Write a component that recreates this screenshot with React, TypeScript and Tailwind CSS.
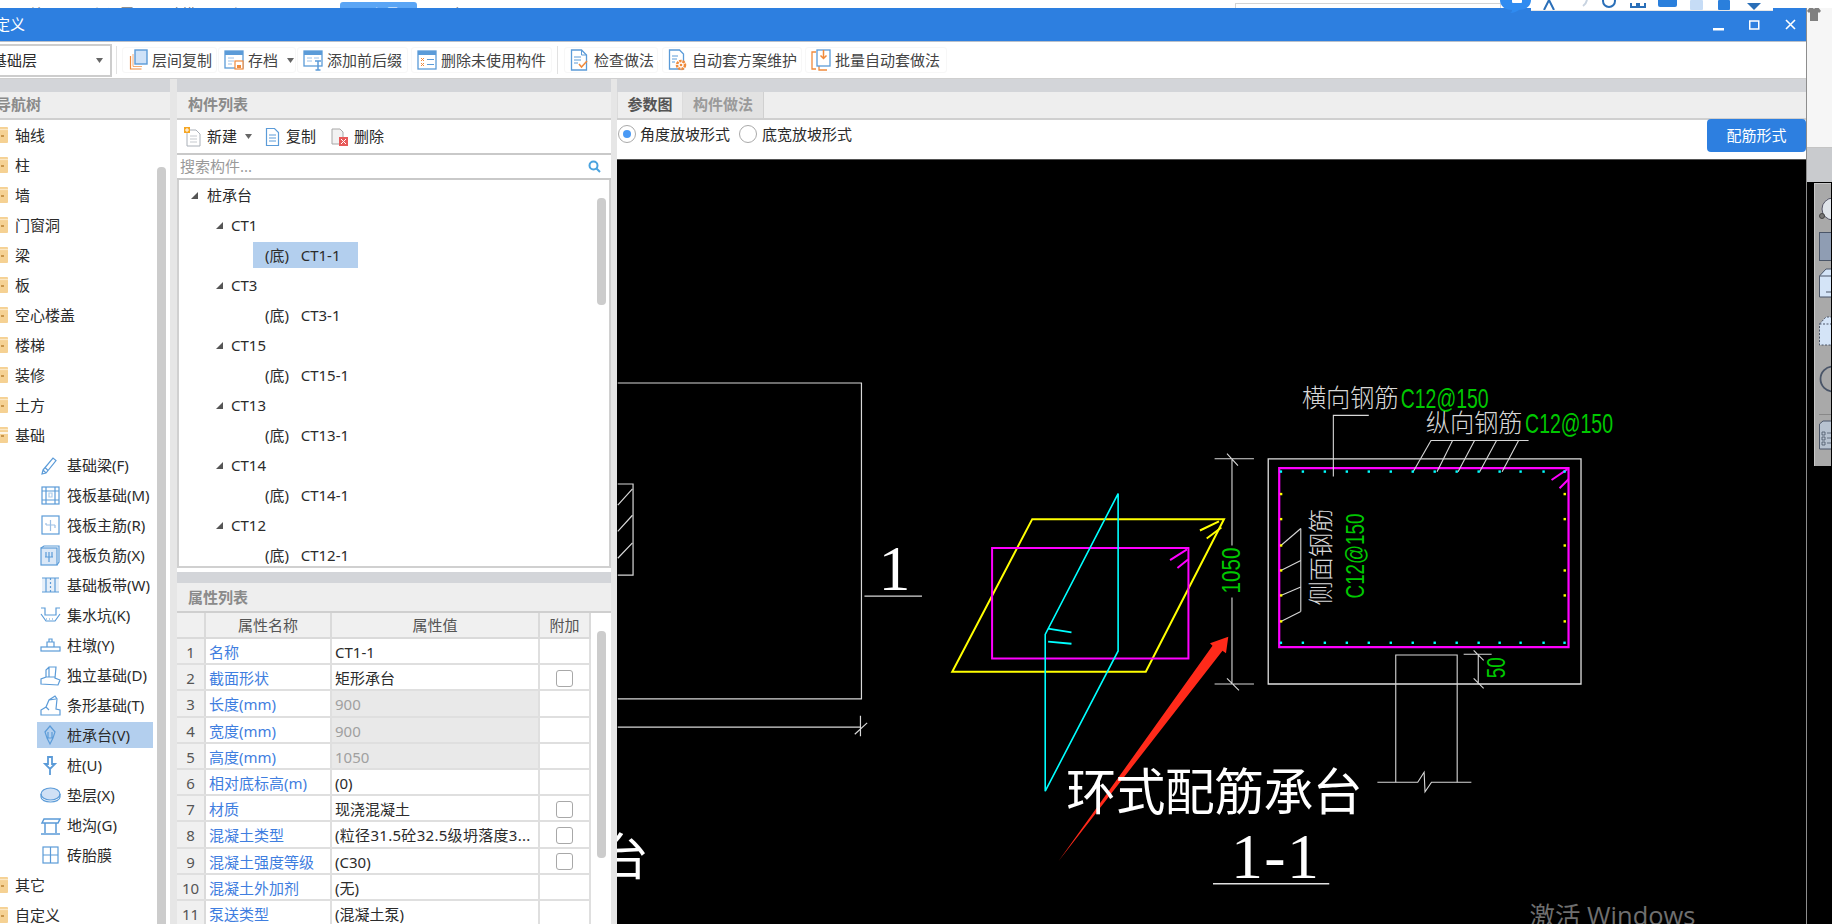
import React from "react";

const FONT = "font-['Noto_Sans','Noto_Sans_CJK_SC',sans-serif]";
const BLUE = "#5b9bd8";
const ORANGE = "#f08a3c";

const Arrow = () => (
  <svg width="7" height="5" viewBox="0 0 7 5" className="shrink-0"><path d="M0 0h7L3.5 5z" fill="#666" /></svg>
);

const Ico: Record<string, React.ReactNode> = {
  floorCopy: (
    <svg width="20" height="22" viewBox="0 0 20 22" fill="none">
      <path d="M2.5 7v13h11" stroke={ORANGE} strokeWidth="1.2" />
      <path d="M5 5v12.500h9" stroke={ORANGE} strokeWidth="1" opacity=".7" />
      <rect x="7" y="1" width="12" height="14" fill="#cfe2f8" stroke={BLUE} strokeWidth="1.400" />
    </svg>
  ),
  save: (
    <svg width="20" height="22" viewBox="0 0 20 22" fill="none">
      <rect x="1" y="2" width="18" height="17" fill="#fff" stroke={BLUE} strokeWidth="1.300" />
      <rect x="1" y="2" width="18" height="4" fill={BLUE} />
      <path d="M4 9h6M4 12h6M4 15h4" stroke="#9cc2ea" />
      <rect x="11" y="12" width="8" height="8" fill="#fff" stroke={ORANGE} strokeWidth="1.200" />
      <rect x="13" y="16" width="4" height="3" fill={ORANGE} />
    </svg>
  ),
  prefix: (
    <svg width="20" height="22" viewBox="0 0 20 22" fill="none">
      <rect x="1" y="2" width="18" height="15" fill="#fff" stroke={BLUE} strokeWidth="1.300" />
      <rect x="1" y="2" width="18" height="4" fill={BLUE} />
      <path d="M4 9h5M11 9h5M4 12h5" stroke="#9cc2ea" />
      <path d="M12 12h6M15 12v9M12.500 21h5" stroke={BLUE} strokeWidth="1.500" />
    </svg>
  ),
  unused: (
    <svg width="20" height="20" viewBox="0 0 20 20" fill="none">
      <rect x="1" y="1" width="18" height="18" fill="#fff" stroke={BLUE} strokeWidth="1.300" />
      <rect x="1" y="1" width="18" height="4" fill={BLUE} />
      <path d="M4 8l3 3M7 8l-3 3M4 13l3 3M7 13l-3 3" stroke={ORANGE} />
      <path d="M10 9.500h7M10 14.500h7" stroke={BLUE} />
    </svg>
  ),
  check: (
    <svg width="20" height="22" viewBox="0 0 20 22" fill="none">
      <path d="M1.500 1h10l5 5v15h-15z" fill="#fff" stroke={BLUE} strokeWidth="1.300" />
      <path d="M11.500 1v5h5M4 8h7M4 11h7M4 14h4" stroke={BLUE} />
      <path d="M9 15l2.500 3 5.500-6" stroke={ORANGE} strokeWidth="1.500" />
    </svg>
  ),
  gear: (
    <svg width="20" height="22" viewBox="0 0 20 22" fill="none">
      <path d="M1.500 1h10l4 4v15h-14z" fill="#fff" stroke={BLUE} strokeWidth="1.300" />
      <path d="M4 7h6M4 10h5M4 13h3" stroke={BLUE} />
      <circle cx="13" cy="16" r="4" fill="#fff" stroke={ORANGE} strokeWidth="2.500" strokeDasharray="2.500 0.800" />
      <circle cx="13" cy="16" r="1.300" fill={ORANGE} />
    </svg>
  ),
  batch: (
    <svg width="20" height="22" viewBox="0 0 20 22" fill="none">
      <path d="M5 3H1v17h4M8 6v15h8" stroke={ORANGE} strokeWidth="1.300" />
      <rect x="6" y="1" width="13" height="16" fill="#fff" stroke={BLUE} strokeWidth="1.300" />
      <path d="M12.500 1v8M9.500 6.500l3 3 3-3" stroke={ORANGE} strokeWidth="1.500" />
    </svg>
  ),
  newDoc: (
    <svg width="18" height="20" viewBox="0 0 18 20" fill="none">
      <path d="M3 3h9l4 4v12H3z" fill="#fff" stroke="#aab0b8" />
      <path d="M6 9h7M6 12h7M6 15h7" stroke="#c5c9ce" />
      <rect x="0" y="0" width="6" height="6" fill="#f6a623" />
      <path d="M1 3h4M3 1v4" stroke="#fff" />
    </svg>
  ),
  copyDoc: (
    <svg width="18" height="20" viewBox="0 0 18 20" fill="none">
      <path d="M2.500 1.500h8l4 4v13h-12z" fill="#fff" stroke={BLUE} strokeWidth="1.200" />
      <path d="M5 8h7M5 11h7M5 14h7" stroke={BLUE} />
    </svg>
  ),
  delDoc: (
    <svg width="18" height="20" viewBox="0 0 18 20" fill="none">
      <path d="M1 2h8l3 3v12H1z" fill="#f2f2f2" stroke="#a8a8a8" />
      <rect x="8" y="10" width="9" height="9" fill="#e75a5a" />
      <path d="M10 12l5 5M15 12l-5 5" stroke="#fff" />
    </svg>
  ),
};

const Folder = ({ open }: { open?: boolean }) => (
  <svg width="8" height="16" viewBox="0 0 8 16" className="shrink-0" fill="none">
    <rect x="-6" y="0" width="14" height="16" rx="1" fill="#f5d193" />
    <path d="M-6 2.500h14" stroke="#fbe8c6" strokeWidth="1.200" />
    {open ? <path d="M0 5h8v2H0z" fill="#fff" opacity=".75" /> : null}
    <rect x="1" y="8" width="3" height="2" fill="#c9954a" />
  </svg>
);

const S = { fill: "none", stroke: BLUE, strokeWidth: 1.2 };
const NavIco: Record<string, React.ReactNode> = {
  beam: <g {...S}><path d="M3 15L13 3l3 2.500L6 18l-4 1zM3 15l3 3M5 12.500l3 3" /></g>,
  raft: <g {...S}><rect x="2" y="2" width="17" height="17" /><path d="M6 2v17M15 2v17M2 6h17M2 15h17" /><path d="M9 8h3v4H9z" opacity=".5" /></g>,
  raftMain: <g {...S}><rect x="2" y="1" width="17" height="18" /><path d="M10.500 5v11M6 10h9M6 10v-2M15 10v3" stroke="#9bbfe5" /></g>,
  raftNeg: <g {...S}><rect x="1" y="3" width="16" height="17" fill="#dbe8f7" /><path d="M1 3l3-2h15v16l-2 3M9 7v10M6 7v5M12 7v5M5 12h8" /></g>,
  band: <g {...S}><rect x="2" y="3" width="17" height="14" fill="#dbe8f7" stroke="none" opacity=".7" /><path d="M2 3h17M2 17h17M6 3v14M15 3v14" /><path d="M10.500 3v14" strokeDasharray="2 2" /></g>,
  sump: <g {...S}><path d="M1 3h4v7h11V3h4M1 9l5 7h9l5-7" /><path d="M6 14h9" strokeDasharray="1 2" /></g>,
  pier: <g {...S}><rect x="1" y="12" width="19" height="4" /><path d="M7 12V7h7v5M9 7V4h3v3" /></g>,
  iso: <g {...S}><path d="M1 19v-5l5-2V5l3-3h7l-1 11 5 2-2 5zM6 12h9M9 2v10" /></g>,
  strip: <g {...S}><path d="M1 20v-5l5-3 3-7 6-4 2 3-1 10 4 1v5zM9 5l7-1M6 12l3 3" /></g>,
  cap: <g {...S}><path d="M10 1l5 6-2 6H7L5 7zM8 7v6M12 7v6M7 13l3 6 3-6" /></g>,
  pile: <g {...S} strokeWidth={1.800}><path d="M8 2h4v7h3l-5 5-5-5h3zM10 14v6" /></g>,
  cushion: <g {...S}><ellipse cx="10.500" cy="9" rx="9.500" ry="6" fill="#cfe0f5" /><path d="M1 9v3c0 3 4.500 5 9.500 5s9.500-2 9.500-5V9" /></g>,
  trench: <g {...S} strokeWidth={1.500}><path d="M4 4h16l-2 4H2zM5 8v10M16 8v10M1 19h19" /></g>,
  brick: <g {...S}><rect x="3" y="2" width="15" height="16" /><path d="M10.500 2v16M3 10h15" /></g>,
};

const Child = ({ k }: { k: string }) => (
  <svg width="21" height="21" viewBox="0 0 21 21" className="shrink-0">{NavIco[k]}</svg>
);

const NAV: { t: string; k?: string; on?: boolean; open?: boolean }[] = [
  { t: "轴线" }, { t: "柱" }, { t: "墙" }, { t: "门窗洞" }, { t: "梁" }, { t: "板" },
  { t: "空心楼盖" }, { t: "楼梯" }, { t: "装修" }, { t: "土方" }, { t: "基础", open: true },
  { t: "基础梁(F)", k: "beam" }, { t: "筏板基础(M)", k: "raft" }, { t: "筏板主筋(R)", k: "raftMain" },
  { t: "筏板负筋(X)", k: "raftNeg" }, { t: "基础板带(W)", k: "band" }, { t: "集水坑(K)", k: "sump" },
  { t: "柱墩(Y)", k: "pier" }, { t: "独立基础(D)", k: "iso" }, { t: "条形基础(T)", k: "strip" },
  { t: "桩承台(V)", k: "cap", on: true }, { t: "桩(U)", k: "pile" }, { t: "垫层(X)", k: "cushion" },
  { t: "地沟(G)", k: "trench" }, { t: "砖胎膜", k: "brick" }, { t: "其它" }, { t: "自定义" },
];

const TREE: { t: string; l: number; on?: boolean }[] = [
  { t: "桩承台", l: 0 }, { t: "CT1", l: 1 }, { t: "(底)   CT1-1", l: 2, on: true },
  { t: "CT3", l: 1 }, { t: "(底)   CT3-1", l: 2 }, { t: "CT15", l: 1 }, { t: "(底)   CT15-1", l: 2 },
  { t: "CT13", l: 1 }, { t: "(底)   CT13-1", l: 2 }, { t: "CT14", l: 1 }, { t: "(底)   CT14-1", l: 2 },
  { t: "CT12", l: 1 }, { t: "(底)   CT12-1", l: 2 },
];

const PROPS: { n: string; v: string; dis?: boolean; c?: boolean; wide?: boolean }[] = [
  { n: "名称", v: "CT1-1" },
  { n: "截面形状", v: "矩形承台", c: true },
  { n: "长度(mm)", v: "900", dis: true },
  { n: "宽度(mm)", v: "900", dis: true },
  { n: "高度(mm)", v: "1050", dis: true },
  { n: "相对底标高(m)", v: "(0)" },
  { n: "材质", v: "现浇混凝土", c: true },
  { n: "混凝土类型", v: "(粒径31.5砼32.5级坍落度3...", c: true, wide: true },
  { n: "混凝土强度等级", v: "(C30)", c: true },
  { n: "混凝土外加剂", v: "(无)" },
  { n: "泵送类型", v: "(混凝土泵)" },
];

const Btn = ({ icon, text, cls, arrow }: { icon: string; text: string; cls: string; arrow?: boolean }) => (
  <div className={`flex items-center h-[26px] pl-[5px] border border-[#f7f7f7] rounded-[3px] shrink-0 ${cls}`}>
    <span className="w-[20px] flex justify-start shrink-0">{Ico[icon]}</span>
    <span className="ml-[4px] whitespace-nowrap text-[#444]">{text}</span>
    {arrow && <span className="ml-[9px]"><Arrow /></span>}
  </div>
);

const PanelHead = ({ children }: { children: React.ReactNode }) => (
  <div className="h-[28px] bg-[#eeeeee] border-b-2 border-[#cfcfcf] flex items-center shrink-0 pb-[2px]">{children}</div>
);

const Strip = ({ cls }: { cls: string }) => <div className={`bg-[#d3d5d9] shrink-0 ${cls}`} />;

const CG = "#00c800";
const CAD_CJK = "'Noto Sans CJK SC','Liberation Sans',sans-serif";
const CAD_NUM = "'Liberation Sans',sans-serif";

const Drawing = () => {
  const topX = [1431.3, 1452.9, 1474.9, 1496.9, 1519];
  const botX = [1413.4, 1437.3, 1458.4, 1480, 1502.5];
  const dotX = [1281, 1303, 1325, 1347, 1369, 1391, 1413, 1435, 1457, 1479, 1500, 1521, 1544, 1565];
  const dotY = [493.5, 518.6, 545, 570, 595, 621];
  const side = [[528, 545], [560, 570], [586.600, 595], [611, 621]];
  return (
    <svg viewBox="617 159 1189 765" className="block w-full h-full" fill="none">
      {/* left elevation */}
      <g stroke="#d8d8d8" strokeWidth="1.200">
        <path d="M617 382.300H861V698.500H617" />
        <path d="M617 483.400H632.300V574.700H617" />
        <path d="M617 504.600L631.700 488.400M617 530.900L631.700 514.700M617 557.800L631.700 542.400" />
        <path d="M617 726.900H860M860 715.400V736M854.300 734L866.700 722.600" />
        <path d="M864 595.600H921.600" />
      </g>
      <text x="878" y="590" fontFamily="'Liberation Serif',serif" fontSize="64" fill="#fff">1</text>
      <text x="598" y="875" fontFamily={CAD_CJK} fontSize="50" fill="#fff">台</text>

      {/* 3D sketch */}
      <path d="M1032 518.600H1224L1145.700 671.500H951.900Z" stroke="#ffff00" strokeWidth="2" />
      <path d="M1199.900 530L1219 520.800M1206.700 538L1221.400 527" stroke="#ffff00" strokeWidth="2" />
      <path d="M991.800 547.400H1188.400V658.200H991.800Z" stroke="#ff00ff" strokeWidth="2" />
      <path d="M1170 559.600L1187 548.800M1177.400 567.600L1188 559" stroke="#ff00ff" strokeWidth="2" />
      <path d="M1118 493V650.600L1045 791V634Z" stroke="#00ffff" strokeWidth="1.600" />
      <path d="M1047.900 628.300L1071.300 632M1047.900 641.300L1071.300 643.400" stroke="#00ffff" strokeWidth="1.800" />

      {/* section */}
      <path d="M1268.300 458.200H1581.500V683.700H1268.300Z" stroke="#e0e0e0" strokeWidth="1.300" />
      <path d="M1279.300 467.500H1569V646.700H1279.300Z" stroke="#ff00ff" strokeWidth="2.200" />
      <path d="M1552 479.400L1568 468.600M1560 487.700L1569 478.700" stroke="#ff00ff" strokeWidth="2" />
      <g stroke="#d8d8d8" strokeWidth="1.100">
        <path d="M1369 414.700H1333.500V476" />
        <path d="M1431 439.900H1529" />
        {topX.map((x, i) => <path key={x} d={`M${x} 439.900L${botX[i]} 471.100`} />)}
        <path d="M1300.900 528V611" />
        {side.map(([a, b]) => <path key={a} d={`M1300.900 ${a}L1281 ${b}`} />)}
        <path d="M1214.600 458.200H1254M1214.600 683.700H1254M1232 458.200V545M1232 597V683.700M1227 453L1238 465M1227 678L1239 690" />
        <path d="M1464 653.900H1492M1478.600 653.900V683.700M1474 650L1484 660M1474 678L1484 688" />
        <path d="M1396 782V654.600H1457.500V782" />
        <path d="M1377.600 782H1418L1424.400 772L1425.300 791.600L1431.800 782H1471.700" />
      </g>
      {dotX.map((x) => (
        <g key={x} fill="#00ffff">
          <rect x={x - 1.200} y="469.800" width="2.400" height="2.400" />
          <rect x={x - 1.200} y="641.200" width="2.400" height="2.400" />
        </g>
      ))}
      {dotY.map((y) => (
        <g key={y} fill="#ffff00">
          <rect x="1280" y={y - 1.200} width="2.400" height="2.400" />
          <rect x="1564" y={y - 1.200} width="2.400" height="2.400" />
        </g>
      ))}

      {/* CAD texts */}
      <text x="1302" y="406" fontFamily={CAD_CJK} fontWeight="300" fontSize="25" fill="#d8d8d8" textLength="97" lengthAdjust="spacingAndGlyphs">横向钢筋</text>
      <text x="1401" y="407" fontFamily={CAD_NUM} fontSize="27" fill={CG} textLength="88" lengthAdjust="spacingAndGlyphs">C12@150</text>
      <text x="1426" y="431" fontFamily={CAD_CJK} fontWeight="300" fontSize="25" fill="#d8d8d8" textLength="97" lengthAdjust="spacingAndGlyphs">纵向钢筋</text>
      <text x="1525.500" y="432" fontFamily={CAD_NUM} fontSize="27" fill={CG} textLength="88" lengthAdjust="spacingAndGlyphs">C12@150</text>
      <text transform="translate(1330 605) rotate(-90)" fontFamily={CAD_CJK} fontWeight="300" fontSize="25" fill="#d8d8d8" textLength="97" lengthAdjust="spacingAndGlyphs">侧面钢筋</text>
      <text transform="translate(1364 598) rotate(-90)" fontFamily={CAD_NUM} fontSize="26" fill={CG} textLength="85" lengthAdjust="spacingAndGlyphs">C12@150</text>
      <text transform="translate(1240 593) rotate(-90)" fontFamily={CAD_NUM} fontSize="26" fill={CG} textLength="46" lengthAdjust="spacingAndGlyphs">1050</text>
      <text transform="translate(1505 678) rotate(-90)" fontFamily={CAD_NUM} fontSize="26" fill={CG} textLength="21" lengthAdjust="spacingAndGlyphs">50</text>

      {/* annotation arrow */}
      <path d="M1058.400 861L1212.500 645.500L1210 643L1228.300 636.300L1226 653L1222.500 650.500Z" fill="#ff2a1a" />

      <text x="1066" y="810" fontFamily={CAD_CJK} fontSize="50" fill="#fff" textLength="297" lengthAdjust="spacing">环式配筋承台</text>
      <text x="1231" y="878" fontFamily="'Liberation Serif',serif" fontSize="64" fill="#fff" textLength="88" lengthAdjust="spacing">1-1</text>
      <path d="M1213 883.700H1329.400" stroke="#e0e0e0" strokeWidth="1.300" />

      <text x="1530" y="925" fontFamily="'Open Sans','Noto Sans CJK SC',sans-serif" fontSize="25.500" fill="#6f6f6f">激活 Windows</text>
    </svg>
  );
};

const Palette = () => (
  <div className="mt-px h-[283px] w-[17px] bg-[#a9a9a9] border-l border-t border-[#c8c8c8] overflow-hidden flex flex-col pl-[4px]">
    <svg width="14" height="24" viewBox="0 0 14 24" className="mt-[13px] shrink-0">
      <circle cx="14" cy="12" r="11" fill="#dfe4ea" stroke="#556" />
      <circle cx="3" cy="19" r="2.500" fill="#777" stroke="#444" />
    </svg>
    <div className="mt-[11px] h-[29px] w-[14px] bg-[#8f9db3] border border-[#4a5568] shrink-0" />
    <svg width="14" height="30" viewBox="0 0 14 30" className="mt-[7px] shrink-0" fill="#d4e4f7" stroke="#4a5568">
      <path d="M.500 8L7 1h8v28H.500zM.500 8H15M7 24h8" />
    </svg>
    <svg width="14" height="30" viewBox="0 0 14 30" className="mt-[18px] shrink-0" fill="#d4e4f7" stroke="#4a5568" strokeDasharray="2 1.500">
      <path d="M.500 8L7 1h8v28H.500zM.500 8H15" />
    </svg>
    <svg width="14" height="30" viewBox="0 0 14 30" className="mt-[18px] shrink-0" fill="none" stroke="#4a5568" strokeWidth="1.800">
      <circle cx="14" cy="15" r="12.500" />
    </svg>
    <div className="mt-[20px] h-px bg-[#888] shrink-0" />
    <svg width="14" height="30" viewBox="0 0 14 30" className="mt-[5px] shrink-0" fill="#b7c2d0" stroke="#4a5568">
      <path d="M.500 4L4 1h11v28H.500z" />
      <path d="M3 12h3v3H3zM3 17h3v3H3zM3 22h3v3H3zM8 13h6M8 18h6M8 23h6" fill="none" strokeWidth=".8" />
    </svg>
  </div>
);

export default function App() {
  return (
    <div className={`relative w-[1832px] h-[924px] overflow-hidden bg-white flex flex-col text-[15px] leading-none text-[#2b2b2b] ${FONT}`}>
      {/* strip of the program behind the window */}
      <div className="h-[8px] shrink-0 flex overflow-hidden text-[14px] text-[#777] bg-white">
        <span className="ml-[16px] mt-[7px]">开始</span>
        <span className="ml-[34px] mt-[7px] whitespace-nowrap">工程设置</span>
        <span className="ml-[34px] mt-[7px]">建模</span>
        <span className="ml-[37px] mt-[7px]">视图</span>
        <span className="ml-[34px] mt-[7px]">工具</span>
        <div className="ml-[17px] mt-[2px] w-[77px] h-[6px] rounded-t-[3px] bg-[#5aa5f5] flex justify-center text-white shrink-0">
          <span className="mt-[5px] whitespace-nowrap">工程量</span>
        </div>
        <span className="ml-[19px] mt-[7px] whitespace-nowrap">云应用</span>
        <div className="ml-[757px] mt-[3px] w-[266px] h-[8px] border border-[#d4d4d4] shrink-0" />
      </div>

      <div className="flex flex-1 min-h-0">
        {/* window */}
        <div className="w-[1807px] shrink-0 flex flex-col border-r border-[#8d8d8d]">
          {/* title bar */}
          <div className="h-[34px] bg-[#2d7fe0] border-b border-[#b9c0ca] flex items-center justify-between shrink-0 text-white">
            <span className="ml-[-5px]">定义</span>
            <div className="flex items-center mr-[10px]">
              <svg width="12" height="12" viewBox="0 0 12 12"><rect x="0" y="9" width="11" height="2.500" fill="#fff" /></svg>
              <svg width="11" height="10" viewBox="0 0 11 10" className="ml-[24px]" fill="none"><rect x=".75" y="1" width="9" height="8" stroke="#fff" strokeWidth="1.500" /></svg>
              <svg width="11" height="11" viewBox="0 0 11 11" className="ml-[25px]" stroke="#fff" strokeWidth="1.600"><path d="M1 1l9 9M10 1l-9 9" /></svg>
            </div>
          </div>

          {/* toolbar */}
          <div className="h-[37px] bg-white border-b border-[#cfcfcf] flex items-center shrink-0">
            <div className="w-[112px] h-[33px] border-2 border-l-0 border-[#cdcdcd] flex items-center justify-between pr-[7px] shrink-0 overflow-hidden">
              <span className="ml-[-8px] whitespace-nowrap">基础层</span>
              <Arrow />
            </div>
            <div className="ml-[4px] w-px h-[28px] bg-[#e2e2e2] shrink-0" />
            <Btn icon="floorCopy" text="层间复制" cls="ml-[5px] w-[95px]" />
            <Btn icon="save" text="存档" cls="ml-[1px] w-[78px]" arrow />
            <Btn icon="prefix" text="添加前后缀" cls="ml-[1px] w-[111px]" />
            <Btn icon="unused" text="删除未使用构件" cls="ml-[3px] w-[141px]" />
            <div className="ml-[5px] w-px h-[28px] bg-[#e2e2e2] shrink-0" />
            <Btn icon="check" text="检查做法" cls="ml-[6px] w-[94px]" />
            <Btn icon="gear" text="自动套方案维护" cls="ml-[4px] w-[140px]" />
            <Btn icon="batch" text="批量自动套做法" cls="ml-[3px] w-[142px]" />
          </div>

          {/* body */}
          <div className="flex flex-1 min-h-0 overflow-hidden">
            {/* navigation */}
            <div className="w-[170px] shrink-0 flex flex-col relative overflow-hidden">
              <Strip cls="h-[13px]" />
              <PanelHead><span className="ml-[-4px] font-bold text-[#8a8a8a]">导航树</span></PanelHead>
              <div>
                {NAV.map((n) => (
                  <div key={n.t} className="h-[30px] flex items-center whitespace-nowrap">
                    {n.k ? (
                      <div className={`ml-[37px] h-[26px] w-[116px] flex items-center pl-[3px] ${n.on ? "bg-[#b3cfee]" : ""}`}>
                        <Child k={n.k} />
                        <span className="ml-[6px]">{n.t}</span>
                      </div>
                    ) : (
                      <>
                        <Folder open={n.open} />
                        <span className="ml-[7px]">{n.t}</span>
                      </>
                    )}
                  </div>
                ))}
              </div>
              <div className="absolute left-[157px] top-[88px] bottom-0 w-[9px] bg-[#cccccc] rounded-t-[4px]" />
            </div>
            <div className="w-[7px] shrink-0 bg-[#e6e6e6]" />

            {/* components */}
            <div className="w-[434px] shrink-0 flex flex-col overflow-hidden">
              <Strip cls="h-[13px]" />
              <PanelHead><span className="ml-[11px] font-bold text-[#8a8a8a]">构件列表</span></PanelHead>
              <div className="h-[33px] flex items-center shrink-0">
                <span className="ml-[7px] w-[18px]">{Ico.newDoc}</span>
                <span className="ml-[5px]">新建</span>
                <span className="ml-[8px]"><Arrow /></span>
                <span className="ml-[12px] w-[18px]">{Ico.copyDoc}</span>
                <span className="ml-[4px]">复制</span>
                <span className="ml-[15px] w-[18px]">{Ico.delDoc}</span>
                <span className="ml-[5px]">删除</span>
              </div>
              <div className="h-[27px] border-y-2 border-[#c9c9c9] flex items-center justify-between shrink-0 pl-[3px] pr-[10px]">
                <span className="text-[#9a9a9a]">搜索构件...</span>
                <svg width="13" height="13" viewBox="0 0 13 13" fill="none" stroke="#4aa3df" strokeWidth="2"><circle cx="5.500" cy="5.500" r="4" /><path d="M8.500 8.500l3.500 3.500" /></svg>
              </div>
              <div className="relative h-[388px] shrink-0 border-x-2 border-b-2 border-[#d0d0d0] overflow-hidden">
                {TREE.map((r, i) => (
                  <div key={i} className="h-[30px] flex items-center whitespace-pre">
                    {r.l === 0 && <><svg width="7" height="7" viewBox="0 0 7 7" className="ml-[12px]"><path d="M7 0v7H0z" fill="#555" /></svg><span className="ml-[9px]">{r.t}</span></>}
                    {r.l === 1 && <><svg width="7" height="7" viewBox="0 0 7 7" className="ml-[37px]"><path d="M7 0v7H0z" fill="#555" /></svg><span className="ml-[8px]">{r.t}</span></>}
                    {r.l === 2 && (
                      <div className={`ml-[74px] h-[26px] w-[105px] flex items-center pl-[12px] ${r.on ? "bg-[#b3cfee]" : ""}`}>{r.t}</div>
                    )}
                  </div>
                ))}
                <div className="absolute left-[418px] top-[18px] h-[107px] w-[9px] bg-[#cccccc] rounded-[4px]" />
              </div>
              <div className="h-[4px] shrink-0" />
              <Strip cls="h-[11px]" />
              <div className="h-[30px] bg-[#eeeeee] border-b-2 border-[#cfcfcf] flex items-center shrink-0 pt-[1px]">
                <span className="ml-[11px] font-bold text-[#8a8a8a]">属性列表</span>
              </div>
              <div className="relative flex-1 min-h-0 overflow-hidden">
                <div className="w-[414px]">
                  <div className="flex h-[26px] bg-[#f0f0f0] border-b-2 border-[#dadada] text-[#555]">
                    <div className="w-[29px] border-r-2 border-[#dadada]" />
                    <div className="w-[126px] border-r-2 border-[#dadada] flex items-center justify-center">属性名称</div>
                    <div className="w-[208px] border-r-2 border-[#dadada] flex items-center justify-center">属性值</div>
                    <div className="w-[51px] border-r-2 border-[#dadada] flex items-center justify-center">附加</div>
                  </div>
                  {PROPS.map((p, i) => (
                    <div key={p.n} className="flex h-[26.2px] border-b-2 border-[#dfdfdf]">
                      <div className="w-[29px] bg-[#f0f0f0] border-r-2 border-[#dadada] flex items-center justify-center pt-[3px] text-[#555]">{i + 1}</div>
                      <div className="w-[126px] border-r-2 border-[#dfdfdf] flex items-center pl-[3px] pt-[3px] text-[#3f7ee0] whitespace-nowrap">{p.n}</div>
                      <div className={`w-[208px] border-r-2 border-[#dfdfdf] flex items-center pl-[3px] pt-[3px] whitespace-nowrap overflow-hidden ${p.dis ? "bg-[#e9e9e9] text-[#a0a0a0]" : ""} ${p.wide ? "tracking-[0.3px]" : ""}`}>{p.v}</div>
                      <div className="w-[51px] border-r-2 border-[#dfdfdf] flex items-center justify-center pt-[2px]">
                        {p.c && <span className="block w-[17px] h-[17px] border border-[#a8a8a8] rounded-[3px] bg-white" />}
                      </div>
                    </div>
                  ))}
                </div>
                <div className="absolute left-[420px] top-[18px] h-[227px] w-[9px] bg-[#cccccc] rounded-[4px]" />
              </div>
            </div>
            <div className="w-[6px] shrink-0 bg-[#e6e6e6]" />

            {/* parameters */}
            <div className="flex-1 min-w-0 flex flex-col">
              <Strip cls="h-[13px]" />
              <div className="h-[28px] bg-[#eeeeee] border-b-2 border-[#cfcfcf] flex shrink-0">
                <div className="w-[66px] flex items-center justify-center pb-[2px] font-bold text-[#555] border-x border-[#dcdcdc]">参数图</div>
                <div className="w-[81px] flex items-center justify-center pb-[2px] font-bold text-[#9a9a9a] bg-[#e2e2e2] border-r border-[#d0d0d0]">构件做法</div>
              </div>
              <div className="h-[39px] shrink-0 flex items-start">
                <div className="h-[28px] flex items-center ml-[1px]">
                  <span className="w-[18px] h-[18px] rounded-full border border-[#aaaaaa] flex items-center justify-center shrink-0">
                    <span className="w-[8px] h-[8px] rounded-full bg-[#4a9af5]" />
                  </span>
                  <span className="ml-[4px]">角度放坡形式</span>
                  <span className="ml-[9px] w-[18px] h-[18px] rounded-full border border-[#aaaaaa] shrink-0" />
                  <span className="ml-[5px]">底宽放坡形式</span>
                </div>
                <div className="ml-auto mt-[-1px] w-[99px] h-[33px] bg-[#2d7fe0] rounded-[4px] flex items-center justify-center text-white shrink-0">配筋形式</div>
              </div>
              <div className="flex-1 min-h-0 bg-black border-t border-[#555]">
                <Drawing />
              </div>
            </div>
          </div>
        </div>

        {/* program behind the window, right of it */}
        <div className="flex-1 min-w-0 flex flex-col">
          <div className="h-[140px] bg-[#f6f6f6] border-b border-[#c4c4c4] shrink-0 overflow-hidden">
            <svg width="14" height="14" viewBox="0 0 14 14" className="mt-[-1px]"><path d="M3 0h2l2 2 2-2h2l3 4-2 2-1-1v9H3V5L2 6 0 4z" fill="#808080" /></svg>
          </div>
          <div className="h-[34px] bg-[#c9cbce] shrink-0" />
          <div className="flex-1 min-h-0 bg-black pl-[7px]">
            <Palette />
          </div>
        </div>
      </div>

      {/* input-method bar over the top edge */}
      <div className="absolute left-[1531px] top-0 w-[242px] h-[11px] bg-white overflow-hidden border-b border-[#e6e6e6]">
        <svg width="242" height="11" viewBox="0 0 242 11" fill="none">
          <path d="M13 10L18 0M18 0L23 10" stroke="#2a6fb8" strokeWidth="2" />
          <path d="M52 6q3-2 4-6" stroke="#c8d3e0" strokeWidth="2" />
          <circle cx="78" cy="1" r="6" stroke="#2a6fb8" strokeWidth="2" />
          <path d="M100 3v4h6V3M108 3v4h6V3" stroke="#2a6fb8" strokeWidth="2" />
          <rect x="127" y="-3" width="19" height="10" rx="2" fill="#2a7fdc" />
          <rect x="159" y="0" width="13" height="10" rx="1" fill="#c6dcf6" />
          <rect x="187" y="0" width="12" height="10" rx="1" fill="#2a7fdc" />
          <path d="M216 3l7 7 7-7z" fill="#2a6fb8" />
        </svg>
      </div>
      <svg width="32" height="14" viewBox="0 0 32 14" className="absolute left-[1500px] top-0">
        <path d="M0 0h31c0 6-5 10-12 10-2 1-5 3-9 3 2-1 2-2 2-3C5 10 0 6 0 0z" fill="#2f8bf0" />
        <rect x="12" y="-2" width="10" height="5" rx="1" fill="#fff" />
      </svg>
    </div>
  );
}
